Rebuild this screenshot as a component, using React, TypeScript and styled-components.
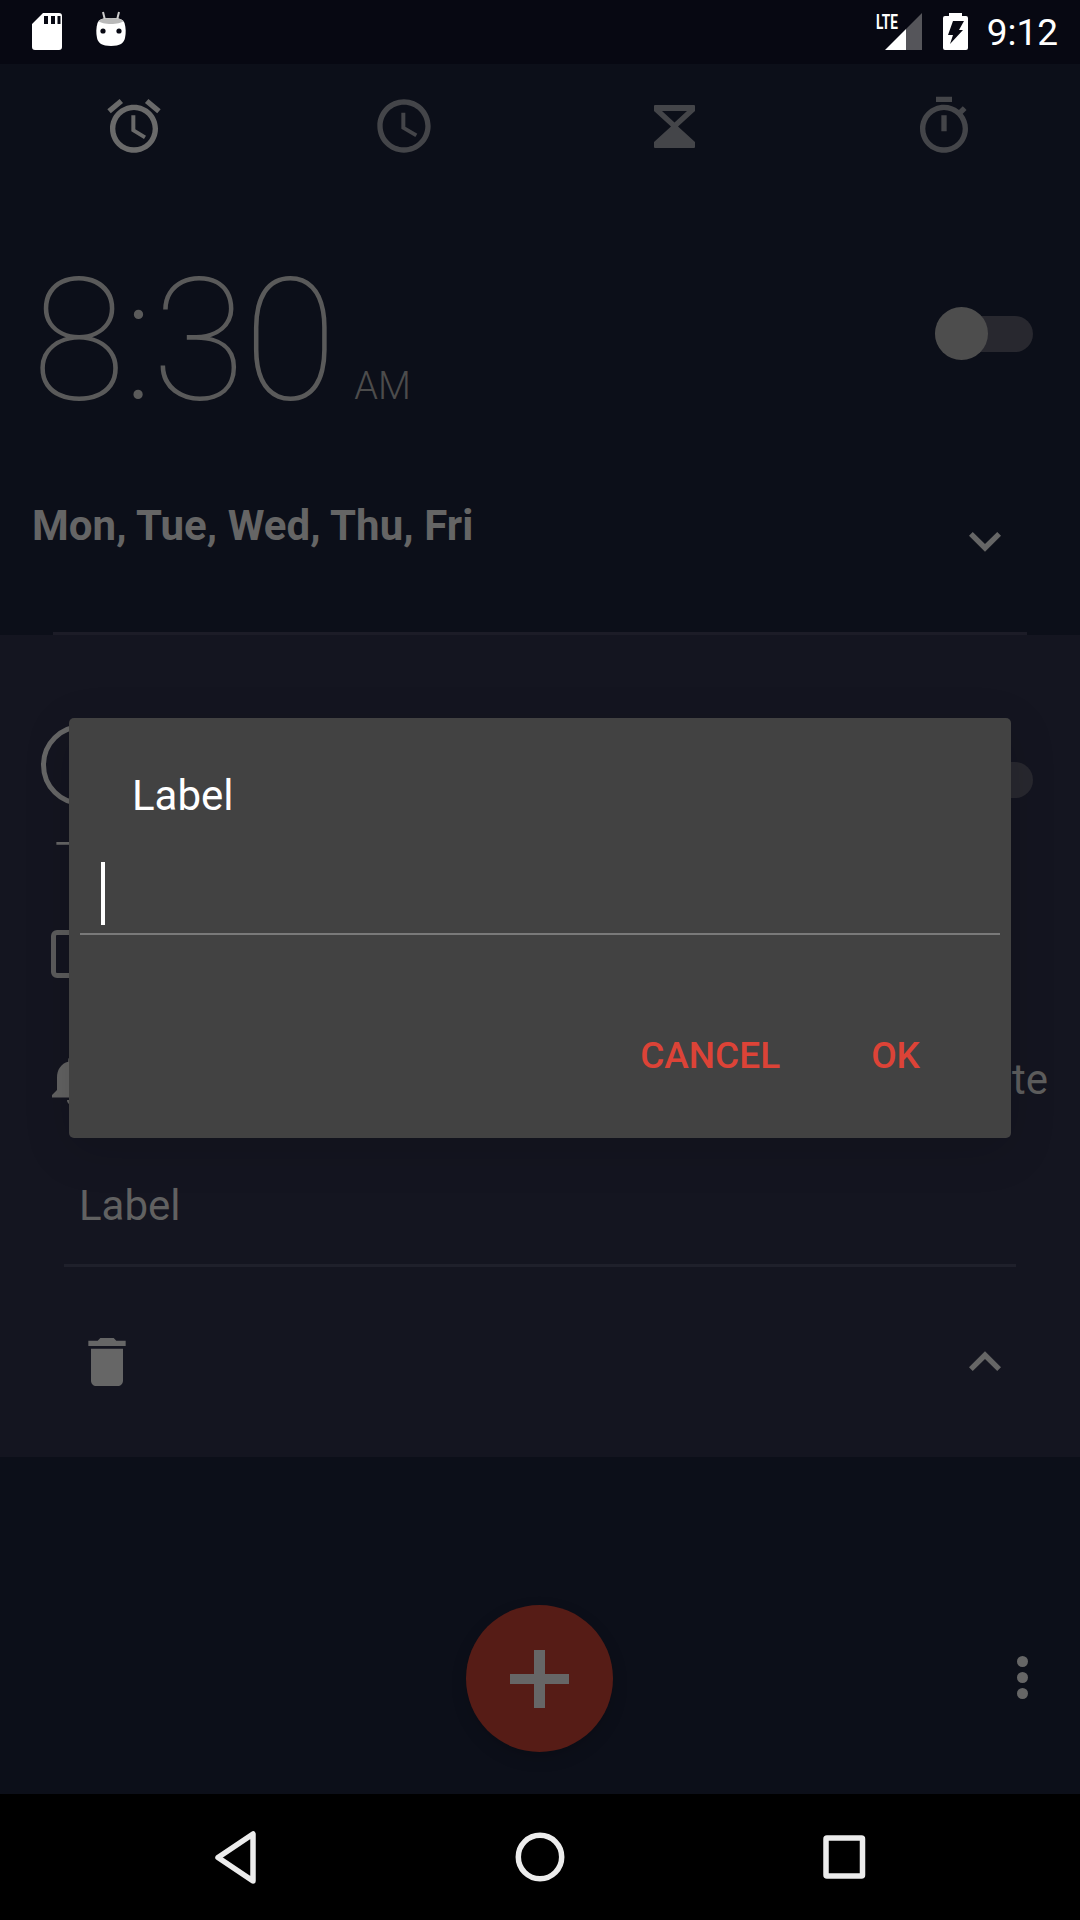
import React from "react";
import styled, { createGlobalStyle } from "styled-components";

const Global = createGlobalStyle`
  html, body { margin: 0; padding: 0; background: #0c0f19; }
  * { box-sizing: border-box; }
`;

const Screen = styled.div`
  position: relative;
  width: 1080px;
  height: 1920px;
  display: flex;
  flex-direction: column;
  overflow: hidden;
  background: #0c0f19;
  font-family: Roboto, "Liberation Sans", sans-serif;
`;

const StatusBar = styled.div`
  height: 64px;
  flex: none;
  background: #070812;
  display: flex;
  align-items: flex-start;
  justify-content: space-between;
  padding: 0 22px 0 32px;
`;
const StatusLeft = styled.div`
  display: flex;
  gap: 33px;
  padding-top: 11px;
`;
const StatusRight = styled.div`
  display: flex;
  align-items: flex-start;
  padding-top: 12px;
`;
const SignalWrap = styled.div`
  position: relative;
  width: 46px;
  height: 40px;
  margin-right: 21px;
`;
const LteText = styled.span`
  position: absolute;
  left: 0;
  top: 0;
  font-size: 20px;
  line-height: 20px;
  font-weight: 700;
  color: #fff;
  transform: scaleX(0.68);
  transform-origin: left top;
`;
const SignalIcon = styled.svg`
  position: absolute;
  left: 9px;
  top: 1px;
`;
const Clock = styled.span`
  margin-left: 19px;
  font-size: 37px;
  line-height: 42px;
  color: #fff;
`;

const TabBar = styled.div`
  height: 124px;
  flex: none;
  display: grid;
  grid-template-columns: repeat(4, 270px);
  margin-left: -1px;
  place-items: center;
`;

const TabIcon = styled.svg<{ $c: string }>`
  fill: ${(p) => p.$c};
  display: block;
`;

const Card = styled.div<{ $raised?: boolean }>`
  flex: none;
  display: flex;
  flex-direction: column;
  height: ${(p) => (p.$raised ? 822 : 447)}px;
  padding-top: ${(p) => (p.$raised ? 72 : 45)}px;
  background: ${(p) => (p.$raised ? "#141520" : "#0c0f19")};
`;

const TimeRow = styled.div<{ $h: number; $left: number }>`
  display: flex;
  justify-content: space-between;
  align-items: flex-start;
  height: ${(p) => p.$h}px;
  padding: 0 47px 0 ${(p) => p.$left}px;
`;
const TimeText = styled.div`
  font-size: 171px;
  font-weight: 100;
  line-height: 216px;
  letter-spacing: -2px;
  color: #5a5a5a;
  white-space: nowrap;
`;
const Meridiem = styled.span`
  font-size: 38px;
  font-weight: 300;
  letter-spacing: 0;
  color: #4c4c4c;
  margin-left: 19px;
`;
const ClockRing = styled.div`
  width: 82px;
  height: 82px;
  margin-top: 17px;
  border: 5px solid #666;
  border-radius: 50%;
`;
const Toggle = styled.div<{ $top: number }>`
  position: relative;
  width: 98px;
  height: 36px;
  margin-top: ${(p) => p.$top}px;
  border-radius: 18px;
  background: #28282f;
`;
const Thumb = styled.div`
  position: absolute;
  left: 0;
  top: -9px;
  width: 53px;
  height: 53px;
  border-radius: 50%;
  background: #4d4d4d;
`;

const DaysRow = styled.div`
  display: flex;
  justify-content: space-between;
  align-items: flex-start;
  padding: 0 63px 0 32px;
`;
const Days = styled.div`
  margin-top: 52px;
  font-size: 42px;
  line-height: 50px;
  font-weight: 700;
  letter-spacing: 0.05px;
  color: #656565;
`;
const Chevron = styled.svg<{ $top?: number }>`
  display: block;
  fill: #666;
  margin-top: ${(p) => p.$top ?? 0}px;
`;
const CardRule = styled.div`
  margin: auto 53px 0;
  height: 3px;
  background: #1c1c27;
`;

const NextText = styled.div`
  margin: 10px 0 0 55px;
  font-size: 54px;
  line-height: 50px;
  font-weight: 300;
  color: #666;
`;
const CheckRow = styled.div`
  display: flex;
  margin: 43px 0 0 51px;
`;
const CheckBox = styled.div`
  width: 48px;
  height: 48px;
  border: 5px solid #5c5c5c;
  border-radius: 6px;
`;
const RingRow = styled.div`
  display: flex;
  align-items: center;
  justify-content: space-between;
  height: 60px;
  margin-top: 72px;
  padding: 0 32px 0 42px;
`;
const BellIcon = styled.svg`
  fill: #626262;
  display: block;
`;
const RowText = styled.span`
  font-size: 42px;
  line-height: 50px;
  color: #5e5e5e;
`;
const LabelRow = styled.div`
  margin: 71px 0 0 79px;
  font-size: 42px;
  line-height: 50px;
  color: #616161;
`;
const LabelRule = styled.div`
  margin: 33px 64px 0;
  height: 3px;
  background: #1f202b;
`;
const ActionRow = styled.div`
  display: flex;
  justify-content: space-between;
  align-items: flex-start;
  margin-top: 63px;
  padding: 0 63px 0 75px;
`;

const FabArea = styled.div`
  flex: 1;
  display: grid;
  grid-template-columns: 466px 147px 1fr;
  align-items: start;
  padding-top: 148px;
`;
const Fab = styled.div`
  grid-column: 2;
  width: 147px;
  height: 147px;
  border-radius: 50%;
  background: #561c16;
  box-shadow: 0 6px 16px rgba(0, 0, 0, 0.15);
  display: flex;
  align-items: center;
  justify-content: center;
`;
const PlusIcon = styled.svg`
  display: block;
  fill: #666;
`;
const MoreDots = styled.div`
  justify-self: end;
  margin: 51px 52px 0 0;
  display: flex;
  flex-direction: column;
  gap: 5px;
`;
const Dot = styled.span`
  width: 11px;
  height: 11px;
  border-radius: 50%;
  background: #666;
`;

const NavBar = styled.div`
  height: 126px;
  flex: none;
  background: #000;
  display: grid;
  grid-template-columns: repeat(3, 305px);
  justify-content: center;
  place-items: center;
`;
const NavIcon = styled.svg`
  display: block;
  fill: none;
  stroke: #ececec;
  stroke-width: 5.5;
  stroke-linejoin: round;
`;

const Dialog = styled.div`
  position: absolute;
  left: 69px;
  top: 718px;
  width: 942px;
  height: 420px;
  background: #424242;
  border-radius: 5px;
  box-shadow: 0 12px 48px rgba(0, 0, 0, 0.14);
  padding-top: 53px;
  display: flex;
  flex-direction: column;
`;
const DialogTitle = styled.div`
  padding-left: 63px;
  font-size: 42px;
  line-height: 50px;
  color: #fff;
`;
const Field = styled.div`
  height: 73px;
  margin: 41px 11px 0;
  padding: 0 21px;
  border-bottom: 2px solid #7a7a7a;
`;
const Caret = styled.div`
  width: 4px;
  height: 63px;
  background: #fff;
`;
const DialogActions = styled.div`
  display: flex;
  justify-content: flex-end;
  gap: 91px;
  padding: 99px 91px 0 0;
`;
const ActionButton = styled.span`
  font-size: 37px;
  line-height: 44px;
  font-weight: 500;
  color: #dc4337;
`;

const ALARM =
  "M22 5.72l-4.6-3.86-1.29 1.53 4.6 3.86L22 5.72zM7.88 3.39L6.6 1.86 2 5.71l1.29 1.53 4.59-3.85zM12.5 8H11v6l4.75 2.85.75-1.23-4-2.37V8zM12 4c-4.97 0-9 4.03-9 9s4.03 9 9 9 9-4.03 9-9-4.03-9-9-9zm0 16c-3.87 0-7-3.13-7-7s3.13-7 7-7 7 3.13 7 7-3.13 7-7 7z";
const CLOCK =
  "M11.99 2C6.47 2 2 6.48 2 12s4.47 10 9.99 10C17.52 22 22 17.52 22 12S17.52 2 11.99 2zM12 20c-4.42 0-8-3.58-8-8s3.58-8 8-8 8 3.58 8 8-3.58 8-8 8zm.5-13H11v6l5.25 3.15.75-1.23-4.5-2.67z";
const TIMER =
  "M15 1H9v2h6V1zm-4 13h2V8h-2v6zm8.03-6.61l1.42-1.42c-.43-.51-.9-.99-1.41-1.41l-1.42 1.42C16.07 4.74 14.12 4 12 4c-4.97 0-9 4.03-9 9s4.02 9 9 9 9-4.03 9-9c0-2.12-.74-4.07-1.97-5.61zM12 20c-3.87 0-7-3.13-7-7s3.13-7 7-7 7 3.13 7 7-3.13 7-7 7z";

const Chev = ({ up, top }: { up?: boolean; top?: number }) => (
  <Chevron $top={top} width="64" height="64" viewBox="0 0 24 24">
    <path d={up ? "M7.41 15.41L12 10.83l4.59 4.58L18 14l-6-6-6 6z" : "M7.41 7.84L12 12.42l4.59-4.58L18 9.25l-6 6-6-6z"} />
  </Chevron>
);

export default function App() {
  return (
    <Screen>
      <Global />
      <StatusBar>
        <StatusLeft>
          <svg width="30" height="40" viewBox="0 0 30 40">
            <path
              fill="#fff"
              fillRule="evenodd"
              d="M11 2H27a3 3 0 0 1 3 3V36a3 3 0 0 1-3 3H3a3 3 0 0 1-3-3V13ZM12 5v8h4V5ZM19 5v8h4V5ZM25.500 5v8h3V5Z"
            />
          </svg>
          <svg width="32" height="38" viewBox="0 0 32 38">
            <path fill="none" stroke="#ccc" strokeWidth="2" d="M8 1l2 8M24 1l-2 8" />
            <path fill="#fff" d="M16 7c8 0 12 1 13.500 5 1.500 5 1.500 10 .5 15-1 5-5 8-14 8S3 32 2 27c-1-5-1-10 .5-15C4 8 8 7 16 7Z" />
            <path fill="#b9b9b9" d="M16 7c6 0 10 .6 12.500 3-2 2-7 3-12.500 3S5.500 12 3.500 10C6 7.600 10 7 16 7Z" />
            <circle cx="8" cy="20" r="2.600" fill="#070812" />
            <circle cx="24" cy="20" r="2.600" fill="#070812" />
          </svg>
        </StatusLeft>
        <StatusRight>
          <SignalWrap>
            <SignalIcon width="37" height="37" viewBox="0 0 37 37">
              <path fill="#55555a" d="M37 0V37H21V16Z" />
              <path fill="#fff" d="M21 16V37H0Z" />
            </SignalIcon>
            <LteText>LTE</LteText>
          </SignalWrap>
          <svg width="25" height="38" viewBox="0 0 25 38">
            <path fill="#fff" d="M6 1h13v3h4a2 2 0 0 1 2 2v30a2 2 0 0 1-2 2H2a2 2 0 0 1-2-2V6a2 2 0 0 1 2-2h4Z" />
            <path fill="#070812" d="M10 9H21L16 18H20L7 32 10 23H5Z" />
          </svg>
          <Clock>9:12</Clock>
        </StatusRight>
      </StatusBar>

      <TabBar>
        <TabIcon $c="#6a6a6a" width="64" height="64" viewBox="0 0 24 24"><path d={ALARM} /></TabIcon>
        <TabIcon $c="#444549" width="64" height="64" viewBox="0 0 24 24"><path d={CLOCK} /></TabIcon>
        <TabIcon $c="#444549" width="41" height="43" viewBox="0 0 41 43">
          <path fillRule="evenodd" d="M1 0H40a1 1 0 0 1 1 1V6L24 21.500 41 37v5a1 1 0 0 1-1 1H1a1 1 0 0 1-1-1V37L17 21.500 0 6V1a1 1 0 0 1 1-1ZM8 6 20.500 17.500 33 6Z" />
        </TabIcon>
        <TabIcon $c="#444549" width="64" height="64" viewBox="0 0 24 24"><path d={TIMER} /></TabIcon>
      </TabBar>

      <Card>
        <TimeRow $h={216} $left={32}>
          <TimeText>8:30<Meridiem>AM</Meridiem></TimeText>
          <Toggle $top={83}><Thumb /></Toggle>
        </TimeRow>
        <DaysRow>
          <Days>Mon, Tue, Wed, Thu, Fri</Days>
          <Chev top={62} />
        </DaysRow>
        <CardRule />
      </Card>

      <Card $raised>
        <TimeRow $h={120} $left={41}>
          <ClockRing />
          <Toggle $top={55}><Thumb /></Toggle>
        </TimeRow>
        <NextText>Tomorrow</NextText>
        <CheckRow><CheckBox /></CheckRow>
        <RingRow>
          <BellIcon width="60" height="60" viewBox="0 0 24 24">
            <path d="M12 22c1.100 0 2-.9 2-2h-4c0 1.100.9 2 2 2zm6-6v-5c0-3.070-1.640-5.640-4.500-6.320V4c0-.83-.67-1.500-1.500-1.500s-1.500.67-1.500 1.500v.68C7.630 5.360 6 7.920 6 11v5l-2 2v1h16v-1l-2-2z" />
          </BellIcon>
          <RowText>Vibrate</RowText>
        </RingRow>
        <LabelRow>Label</LabelRow>
        <LabelRule />
        <ActionRow>
          <Chevron width="64" height="64" viewBox="0 0 24 24">
            <path d="M6 19c0 1.100.9 2 2 2h8c1.100 0 2-.9 2-2V7H6v12zM19 4h-3.500l-1-1h-5l-1 1H5v2h14V4z" />
          </Chevron>
          <Chev up />
        </ActionRow>
      </Card>

      <FabArea>
        <Fab>
          <PlusIcon width="59" height="58" viewBox="0 0 59 58">
            <path d="M24 0h11v24h24v10H35v24H24V34H0V24h24Z" />
          </PlusIcon>
        </Fab>
        <MoreDots><Dot /><Dot /><Dot /></MoreDots>
      </FabArea>

      <NavBar>
        <NavIcon width="48" height="56" viewBox="0 0 48 56"><path d="M42 5V52L7 28.500Z" /></NavIcon>
        <NavIcon width="56" height="56" viewBox="0 0 56 56"><circle cx="28" cy="28" r="21.700" /></NavIcon>
        <NavIcon width="48" height="48" viewBox="0 0 48 48"><rect x="5" y="5" width="36.500" height="38" rx="1" /></NavIcon>
      </NavBar>

      <Dialog>
        <DialogTitle>Label</DialogTitle>
        <Field><Caret /></Field>
        <DialogActions>
          <ActionButton>CANCEL</ActionButton>
          <ActionButton>OK</ActionButton>
        </DialogActions>
      </Dialog>
    </Screen>
  );
}
